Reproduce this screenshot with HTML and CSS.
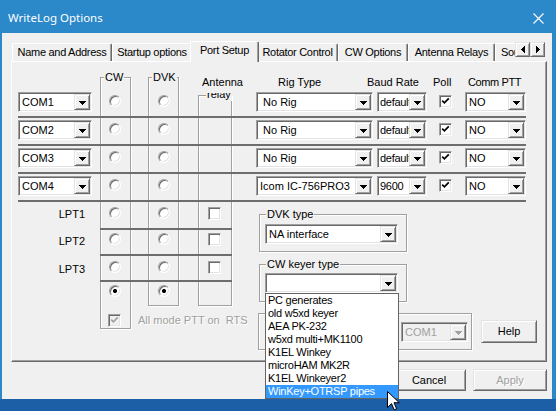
FILE: index.html
```html
<!DOCTYPE html>
<html>
<head>
<meta charset="utf-8">
<title>WriteLog Options</title>
<link rel="stylesheet" href="styles.css">
</head>
<body>
<div class="window">
  <div class="titlebar">
    <span class="title">WriteLog Options</span>
    <svg class="close" width="11" height="11" viewBox="0 0 11 11"><path d="M0.5 0.5L10.5 10.5M10.5 0.5L0.5 10.5" stroke="#fff" stroke-width="1.1" fill="none"/></svg>
  </div>
  <div class="client">
    <div class="tabrow">
      <div class="tabs">
        <div class="tab t1">Name and Address</div>
        <div class="tab t2">Startup options</div>
        <div class="tab t3 sel">Port Setup</div>
        <div class="tab t4">Rotator Control</div>
        <div class="tab t5">CW Options</div>
        <div class="tab t6">Antenna Relays</div>
        <div class="tab t7">Sound</div>
      </div>
      <div class="spin">
        <div class="sbtn"><svg width="4" height="7" shape-rendering="crispEdges"><path d="M3 0h1v7h-1v-1h-1v-1h-1v-1h-1v-1h1v-1h1v-1h1z"/></svg></div>
        <div class="sbtn"><svg width="4" height="7" shape-rendering="crispEdges"><path d="M0 0h1v1h1v1h1v1h1v1h-1v1h-1v1h-1v1h-1z"/></svg></div>
      </div>
    </div>
    <div class="panel">
      <div class="grp grp-cw"><span class="legend lg-cw">CW</span></div>
      <div class="grp grp-dvk"><span class="legend lg-dvk">DVK</span></div>
      <div class="grp grp-ant"><span class="legend lg-ant">relay</span></div>
      <div class="lbl lbl-ant">Antenna</div>
      <div class="lbl lbl-rig">Rig Type</div>
      <div class="lbl lbl-baud">Baud Rate</div>
      <div class="lbl lbl-poll">Poll</div>
      <div class="lbl lbl-ptt">Comm PTT</div>

      <!-- COM1 -->
      <div class="combo com r2"><span class="val">COM1</span><span class="dd"><svg width="7" height="4" shape-rendering="crispEdges"><path d="M0 0h7v1h-1v1h-1v1h-1v1h-1v-1h-1v-1h-1v-1h-1z"/></svg></span></div>
      <div class="radio cw r2 mt5"></div>
      <div class="radio dvk r2 mt5"></div>
      <div class="combo rig r2"><span class="val">&nbsp;No Rig</span><span class="dd"><svg width="7" height="4" shape-rendering="crispEdges"><path d="M0 0h7v1h-1v1h-1v1h-1v1h-1v-1h-1v-1h-1v-1h-1z"/></svg></span></div>
      <div class="combo baud r2"><span class="val">default</span><span class="dd"><svg width="7" height="4" shape-rendering="crispEdges"><path d="M0 0h7v1h-1v1h-1v1h-1v1h-1v-1h-1v-1h-1v-1h-1z"/></svg></span></div>
      <div class="check poll r2 mt5"><svg width="9" height="9" viewBox="0 0 9 9"><path d="M1.2 3.6L3.4 5.8L7.8 1.4" stroke="#000" stroke-width="1.7" fill="none"/></svg></div>
      <div class="combo ptt r2"><span class="val">NO</span><span class="dd"><svg width="7" height="4" shape-rendering="crispEdges"><path d="M0 0h7v1h-1v1h-1v1h-1v1h-1v-1h-1v-1h-1v-1h-1z"/></svg></span></div>
      <div class="sep wide r2"></div>

      <!-- COM2 -->
      <div class="combo com r3"><span class="val">COM2</span><span class="dd"><svg width="7" height="4" shape-rendering="crispEdges"><path d="M0 0h7v1h-1v1h-1v1h-1v1h-1v-1h-1v-1h-1v-1h-1z"/></svg></span></div>
      <div class="radio cw r3 mt5"></div>
      <div class="radio dvk r3 mt5"></div>
      <div class="combo rig r3"><span class="val">&nbsp;No Rig</span><span class="dd"><svg width="7" height="4" shape-rendering="crispEdges"><path d="M0 0h7v1h-1v1h-1v1h-1v1h-1v-1h-1v-1h-1v-1h-1z"/></svg></span></div>
      <div class="combo baud r3"><span class="val">default</span><span class="dd"><svg width="7" height="4" shape-rendering="crispEdges"><path d="M0 0h7v1h-1v1h-1v1h-1v1h-1v-1h-1v-1h-1v-1h-1z"/></svg></span></div>
      <div class="check poll r3 mt5"><svg width="9" height="9" viewBox="0 0 9 9"><path d="M1.2 3.6L3.4 5.8L7.8 1.4" stroke="#000" stroke-width="1.7" fill="none"/></svg></div>
      <div class="combo ptt r3"><span class="val">NO</span><span class="dd"><svg width="7" height="4" shape-rendering="crispEdges"><path d="M0 0h7v1h-1v1h-1v1h-1v1h-1v-1h-1v-1h-1v-1h-1z"/></svg></span></div>
      <div class="sep wide r3"></div>

      <!-- COM3 -->
      <div class="combo com r4"><span class="val">COM3</span><span class="dd"><svg width="7" height="4" shape-rendering="crispEdges"><path d="M0 0h7v1h-1v1h-1v1h-1v1h-1v-1h-1v-1h-1v-1h-1z"/></svg></span></div>
      <div class="radio cw r4 mt5"></div>
      <div class="radio dvk r4 mt5"></div>
      <div class="combo rig r4"><span class="val">&nbsp;No Rig</span><span class="dd"><svg width="7" height="4" shape-rendering="crispEdges"><path d="M0 0h7v1h-1v1h-1v1h-1v1h-1v-1h-1v-1h-1v-1h-1z"/></svg></span></div>
      <div class="combo baud r4"><span class="val">default</span><span class="dd"><svg width="7" height="4" shape-rendering="crispEdges"><path d="M0 0h7v1h-1v1h-1v1h-1v1h-1v-1h-1v-1h-1v-1h-1z"/></svg></span></div>
      <div class="check poll r4 mt5"><svg width="9" height="9" viewBox="0 0 9 9"><path d="M1.2 3.6L3.4 5.8L7.8 1.4" stroke="#000" stroke-width="1.7" fill="none"/></svg></div>
      <div class="combo ptt r4"><span class="val">NO</span><span class="dd"><svg width="7" height="4" shape-rendering="crispEdges"><path d="M0 0h7v1h-1v1h-1v1h-1v1h-1v-1h-1v-1h-1v-1h-1z"/></svg></span></div>
      <div class="sep wide r4"></div>

      <!-- COM4 -->
      <div class="combo com r5"><span class="val">COM4</span><span class="dd"><svg width="7" height="4" shape-rendering="crispEdges"><path d="M0 0h7v1h-1v1h-1v1h-1v1h-1v-1h-1v-1h-1v-1h-1z"/></svg></span></div>
      <div class="radio cw r5 mt5"></div>
      <div class="radio dvk r5 mt5"></div>
      <div class="combo rig r5"><span class="val">Icom IC-756PRO3</span><span class="dd"><svg width="7" height="4" shape-rendering="crispEdges"><path d="M0 0h7v1h-1v1h-1v1h-1v1h-1v-1h-1v-1h-1v-1h-1z"/></svg></span></div>
      <div class="combo baud r5"><span class="val">9600</span><span class="dd"><svg width="7" height="4" shape-rendering="crispEdges"><path d="M0 0h7v1h-1v1h-1v1h-1v1h-1v-1h-1v-1h-1v-1h-1z"/></svg></span></div>
      <div class="check poll r5 mt5"><svg width="9" height="9" viewBox="0 0 9 9"><path d="M1.2 3.6L3.4 5.8L7.8 1.4" stroke="#000" stroke-width="1.7" fill="none"/></svg></div>
      <div class="combo ptt r5"><span class="val">NO</span><span class="dd"><svg width="7" height="4" shape-rendering="crispEdges"><path d="M0 0h7v1h-1v1h-1v1h-1v1h-1v-1h-1v-1h-1v-1h-1z"/></svg></span></div>
      <div class="sep wide r5"></div>

      <!-- LPT rows -->
      <div class="lbl lpt r6 mt6">LPT1</div>
      <div class="radio cw r6 mt5"></div>
      <div class="radio dvk r6 mt5"></div>
      <div class="check ant r6 mt5"></div>
      <div class="sep short r6"></div>

      <div class="lbl lpt r7 mt5">LPT2</div>
      <div class="radio cw r7 mt3"></div>
      <div class="radio dvk r7 mt3"></div>
      <div class="check ant r7 mt3"></div>
      <div class="sep short r7"></div>

      <div class="lbl lpt r8 mt7">LPT3</div>
      <div class="radio cw r8 mt5"></div>
      <div class="radio dvk r8 mt5"></div>
      <div class="check ant r8 mt5"></div>
      <div class="sep short r8"></div>

      <div class="radio cw r9 mt3 on"></div>
      <div class="radio dvk r9 mt3 on"></div>

      <div class="check rtsbox r10 mt8 off"><svg width="9" height="9" viewBox="0 0 9 9"><path d="M1.2 3.6L3.4 5.8L7.8 1.4" stroke="#a0a0a0" stroke-width="1.7" fill="none"/></svg></div>
      <div class="lbl rts r10 mt8">All mode PTT on&nbsp; RTS</div>

      <div class="lower">
        <div class="grp g-box">
          <span class="legend lg-box">DVK type</span>
          <div class="combo wcombo mt3"><span class="val">NA interface</span><span class="dd"><svg width="7" height="4" shape-rendering="crispEdges"><path d="M0 0h7v1h-1v1h-1v1h-1v1h-1v-1h-1v-1h-1v-1h-1z"/></svg></span></div>
        </div>
        <div class="grp g-box">
          <span class="legend lg-box">CW keyer type</span>
          <div class="combo wcombo mt2"><span class="val"></span><span class="dd"><svg width="7" height="4" shape-rendering="crispEdges"><path d="M0 0h7v1h-1v1h-1v1h-1v1h-1v-1h-1v-1h-1v-1h-1z"/></svg></span></div>
        </div>
        <div class="lowrow">
          <div class="grp g-port">
            <div class="combo pcombo off"><span class="val">COM1</span><span class="dd"><svg width="7" height="4" shape-rendering="crispEdges"><path fill="#a0a0a0" d="M0 0h7v1h-1v1h-1v1h-1v1h-1v-1h-1v-1h-1v-1h-1z"/></svg></span></div>
          </div>
          <div class="btn help">Help</div>
        </div>
      </div>
    </div>
    <div class="buttons">
      <div class="btn okbtn">OK</div>
      <div class="btn">Cancel</div>
      <div class="btn off">Apply</div>
    </div>
  </div>
</div>

<div class="droplist">
  <div class="item">PC generates</div>
  <div class="item">old w5xd keyer</div>
  <div class="item">AEA PK-232</div>
  <div class="item">w5xd multi+MK1100</div>
  <div class="item">K1EL Winkey</div>
  <div class="item">microHAM MK2R</div>
  <div class="item">K1EL Winkeyer2</div>
  <div class="item hl">WinKey+OTRSP pipes</div>
</div>

<svg class="cursor" width="13" height="20" viewBox="0 0 13 20"><path d="M0.5 0.5V16.5L4.5 12.6L7.2 18.8L9.6 17.8L7 11.7H12.3Z" fill="#fff" stroke="#000" stroke-width="1" stroke-linejoin="miter"/></svg>
</body>
</html>
```

FILE: styles.css
```css
html, body {
  margin: 0;
  padding: 0;
}
body {
  width: 556px;
  height: 411px;
  overflow: hidden;
  background: #1d5fa6;
  font-family: "Liberation Sans", Arial, sans-serif;
  font-size: 11px;
  line-height: 13px;
  color: #000;
  position: relative;
}
.window {
  width: 556px;
  height: 399px;
  background: #2b88c9;
  display: flex;
  flex-direction: column;
}
.titlebar {
  height: 33px;
  flex: none;
  display: flex;
  align-items: center;
  padding-left: 8px;
}
.title {
  font-family: "Noto Sans", "Open Sans", sans-serif;
  font-size: 11.5px;
  color: #fff;
  margin-top: 2px;
}
.close {
  margin-left: auto;
  margin-right: 12px;
  margin-top: 3px;
}
.client {
  flex: 1;
  margin: 0 4px 0 2px;
  background: #f0f0f0;
  padding-top: 8px;
  display: flex;
  flex-direction: column;
}

/* tabs */
.tabrow {
  display: flex;
  height: 21px;
  margin-left: 10px;
  margin-right: 7px;
}
.tabs {
  flex: 1;
  display: flex;
  overflow: hidden;
  align-items: flex-end;
}
.tab {
  flex: none;
  box-sizing: border-box;
  height: 18px;
  margin-bottom: 1px;
  border-top: 1px solid #fff;
  border-left: 1px solid #fff;
  border-right: 1px solid #696969;
  border-radius: 2px 2px 0 0;
  box-shadow: inset -1px 0 0 #a0a0a0;
  padding-top: 2px;
  text-align: center;
  white-space: nowrap;
  letter-spacing: -0.3px;
  background: #f0f0f0;
}
.t1 { width: 100px; }
.t2 { width: 80px; }
.t3 { width: 65px; }
.t4 { width: 81px; }
.t5 { width: 70px; }
.t6 { width: 87px; }
.t7 { width: 80px; text-align: left; padding-left: 5px; }
.tab.sel {
  width: 69px;
  height: 21px;
  margin: 0 -2px 0 -2px;
  position: relative;
  z-index: 1;
}
.spin {
  display: flex;
  align-self: flex-end;
  margin-bottom: 5px;
}
.sbtn {
  width: 15px;
  height: 15px;
  box-sizing: border-box;
  border: 1px solid;
  border-color: #e3e3e3 #696969 #696969 #e3e3e3;
  box-shadow: inset 1px 1px 0 #fff, inset -1px -1px 0 #a0a0a0;
  background: #f0f0f0;
  display: flex;
  align-items: center;
  justify-content: center;
}

/* panel */
.panel {
  box-sizing: border-box;
  width: 536px;
  height: 301px;
  margin-left: 9px;
  margin-top: -1px;
  border: 1px solid;
  border-color: #fff #696969 #696969 #fff;
  box-shadow: inset -1px -1px 0 #a0a0a0;
  display: grid;
  grid-template-columns: 6px 74px 8px 31px 17px 31px 19px 34px 24px 117px 4px 50px 38px 61px 1fr;
  grid-template-rows: 28px 28px 28px 28px 28px 28px 26px 26px 24px 27px 1fr;
}
.panel > * {
  align-self: start;
  justify-self: start;
}
.r1 { grid-row: 1; }
.r2 { grid-row: 2; }
.r3 { grid-row: 3; }
.r4 { grid-row: 4; }
.r5 { grid-row: 5; }
.r6 { grid-row: 6; }
.r7 { grid-row: 7; }
.r8 { grid-row: 8; }
.r9 { grid-row: 9; }
.r10 { grid-row: 10; }
.mt2 { margin-top: 2px; }
.mt3 { margin-top: 3px; }
.mt5 { margin-top: 5px; }
.mt6 { margin-top: 6px; }
.mt7 { margin-top: 7px; }
.mt8 { margin-top: 8px; }

/* group boxes */
.grp {
  box-sizing: border-box;
  border: 1px solid #a0a0a0;
  box-shadow: inset 1px 1px 0 #fff, 1px 1px 0 #fff;
}
.panel > .grp {
  align-self: stretch;
  justify-self: stretch;
}
.grp-cw { grid-column: 4; grid-row: 1 / 11; margin: 15px 0 4px 0; }
.grp-dvk { grid-column: 6; grid-row: 1 / 10; margin-top: 15px; }
.grp-ant { grid-column: 8; grid-row: 1 / 10; margin-top: 33px; }
.legend {
  display: block;
  width: max-content;
  margin: -7px 0 0 3px;
  padding: 0 1px;
  background: #f0f0f0;
  line-height: 13px;
}
.lg-ant { margin: -8px 0 0 7px; }
.lg-box { margin-left: 6px; }

/* labels */
.lbl { white-space: nowrap; }
.lbl-ant {
  grid-row: 1;
  grid-column: 8 / 10;
  margin: 14px 0 0 4px;
  padding-bottom: 4px;
  background: #f0f0f0;
}
.lbl-rig { grid-row: 1; grid-column: 10; margin: 14px 0 0 22px; }
.lbl-baud { grid-row: 1; grid-column: 12; margin: 14px 0 0 -10px; }
.lbl-poll { grid-row: 1; grid-column: 13; margin: 14px 0 0 6px; }
.lbl-ptt { grid-row: 1; grid-column: 14; margin: 14px 0 0 3px; letter-spacing: -0.4px; }
.lpt { grid-column: 2; justify-self: end; margin-right: 7px; }
.panel > .lpt { justify-self: end; }
.rts {
  grid-column: 5 / 11;
  margin-left: 7px;
  color: #a0a0a0;
  text-shadow: 1px 1px 0 #fff;
}

/* combo box */
.combo {
  box-sizing: border-box;
  height: 20px;
  border: 1px solid;
  border-color: #a0a0a0 #fff #fff #a0a0a0;
  box-shadow: inset 1px 1px 0 #696969, inset -1px -1px 0 #e3e3e3;
  background: #fff;
  padding: 1px;
  display: flex;
}
.panel > .combo {
  justify-self: stretch;
  margin-top: 2px;
}
.combo .val {
  flex: 1;
  min-width: 0;
  overflow: hidden;
  white-space: nowrap;
  padding: 2px 0 0 2px;
  line-height: 13px;
}
.combo .dd {
  flex: none;
  width: 16px;
  height: 16px;
  box-sizing: border-box;
  background: #f0f0f0;
  border: 1px solid;
  border-color: #e3e3e3 #696969 #696969 #e3e3e3;
  box-shadow: inset 1px 1px 0 #fff, inset -1px -1px 0 #a0a0a0;
  display: flex;
  align-items: center;
  justify-content: center;
}
.combo .dd svg { margin-top: 1px; }
.com { grid-column: 2; }
.rig { grid-column: 10; }
.baud { grid-column: 12; }
.baud .val { padding-left: 1px; letter-spacing: -0.3px; }
.ptt { grid-column: 14; }
.combo.off { background: #f0f0f0; color: #a0a0a0; }
.wcombo { width: 133px; margin-left: 5px; }
.pcombo { width: 67px; margin: 8px 0 0 142px; }

/* radio */
.radio {
  box-sizing: border-box;
  width: 12px;
  height: 12px;
  border-radius: 50%;
  border: 1px solid;
  border-color: #a0a0a0 #fff #fff #a0a0a0;
  box-shadow: inset 1px 1px 0 #696969, inset -1px -1px 0 #e3e3e3;
  background: #fff;
}
.radio.on {
  background: radial-gradient(circle at 50% 50%, #000 0 1.8px, #fff 2.3px);
}
.cw { grid-column: 4; margin-left: 9px; }
.dvk { grid-column: 6; margin-left: 10px; }

/* checkbox */
.check {
  box-sizing: border-box;
  width: 13px;
  height: 13px;
  border: 1px solid;
  border-color: #a0a0a0 #fff #fff #a0a0a0;
  box-shadow: inset 1px 1px 0 #696969, inset -1px -1px 0 #e3e3e3;
  background: #fff;
  display: flex;
  align-items: center;
  justify-content: center;
}
.check.off { background: #f0f0f0; }
.poll { grid-column: 13; margin-left: 12px; }
.ant { grid-column: 8; margin-left: 10px; }
.rtsbox { grid-column: 4; margin-left: 8px; }

/* separators */
.sep {
  height: 2px;
  background: #6d6d6d;
}
.panel > .sep {
  align-self: end;
  justify-self: stretch;
}
.sep.wide { grid-column: 2 / 15; }
.sep.short { grid-column: 4 / 9; }

/* lower right block */
.lower {
  grid-column: 10 / 16;
  grid-row: 6 / 12;
  display: flex;
  flex-direction: column;
}
.g-box {
  width: 148px;
  height: 38px;
  margin: 12px 0 0 3px;
}
.lowrow {
  display: flex;
  margin-top: 11px;
}
.g-port {
  width: 214px;
  height: 37px;
  margin-left: 2px;
}

/* buttons */
.btn {
  box-sizing: border-box;
  width: 74px;
  height: 22px;
  border: 1px solid;
  border-color: #e3e3e3 #696969 #696969 #e3e3e3;
  box-shadow: inset 1px 1px 0 #fff, inset -1px -1px 0 #a0a0a0;
  background: #f0f0f0;
  display: flex;
  align-items: center;
  justify-content: center;
}
.btn.off { color: #a0a0a0; text-shadow: 1px 1px 0 #fff; }
.help {
  width: 56px;
  height: 23px;
  margin: 7px 0 0 9px;
}
.buttons {
  display: flex;
  justify-content: flex-end;
  gap: 7px;
  margin: 7px 5px 0 0;
}

/* popup list (overlay) */
.droplist {
  position: absolute;
  left: 265px;
  top: 293px;
  width: 134px;
  box-sizing: border-box;
  border: 1px solid #646464;
  background: #fff;
  z-index: 5;
}
.item {
  height: 13px;
  line-height: 13px;
  padding-left: 2px;
  white-space: nowrap;
  letter-spacing: -0.25px;
}
.item.hl {
  background: #3399ff;
  color: #fff;
}
.cursor {
  position: absolute;
  left: 387px;
  top: 391px;
  z-index: 6;
}
```
